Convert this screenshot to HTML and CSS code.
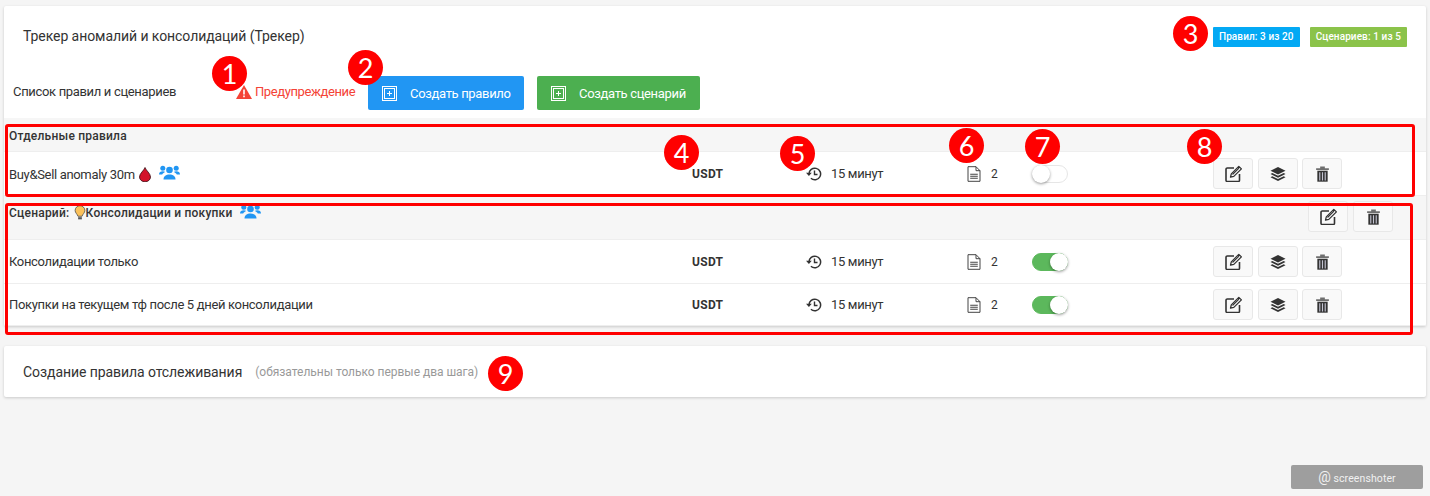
FILE: index.html
```html
<!DOCTYPE html>
<html lang="ru">
<head>
<meta charset="utf-8">
<title>Трекер</title>
<link rel="stylesheet" href="styles.css">
</head>
<body>
<svg class="defs" width="0" height="0" aria-hidden="true">
  <defs>
    <symbol id="i-edit" viewBox="0 0 17 17">
      <path d="M9 3H2.300C1.600 3 1 3.600 1 4.300v10.900c0 .7.600 1.300 1.300 1.300h10.900c.7 0 1.300-.6 1.300-1.300V9" fill="none" stroke="currentColor" stroke-width="1.600"/>
      <path d="M5.500 12.200l.8-3.300L13.800 1.400l2.600 2.500-7.600 7.500z" fill="#fff" stroke="currentColor" stroke-width="1.300" stroke-linejoin="round"/>
      <path d="M7.500 9.500l6.500-6.400" stroke="currentColor" stroke-width="1.100"/>
    </symbol>
    <symbol id="i-layers" viewBox="0 0 16 16">
      <path d="M8 1l7.500 3.800L8 8.500.5 4.800z" fill="currentColor"/>
      <path d="M2.300 7L.5 8 8 11.700 15.500 8l-1.800-1L8 9.800z" fill="currentColor"/>
      <path d="M2.300 10.300l-1.800 1L8 15l7.500-3.700-1.800-1L8 13.100z" fill="currentColor"/>
    </symbol>
    <symbol id="i-trash" viewBox="0 0 16 17">
      <path d="M5.500.5h5v1.800h4.300v2H1.200v-2h4.300z" fill="currentColor" opacity=".7"/>
      <path d="M2.500 5h11v11.700h-11z" fill="currentColor"/>
      <path d="M4.500 6.500h1.200v8.800H4.500zM7.400 6.500h1.200v8.800H7.400zM10.300 6.500h1.200v8.800h-1.200z" fill="#c4c4d2"/>
    </symbol>
    <symbol id="i-history" viewBox="0 0 16 16">
      <path d="M3 8a5.800 5.800 0 1 1 1.900 4.300" fill="none" stroke="currentColor" stroke-width="1.500"/>
      <path d="M0 6.800h5.800L2.900 10z" fill="currentColor"/>
      <path d="M8.500 4.500v4h3" fill="none" stroke="currentColor" stroke-width="1.400"/>
    </symbol>
    <symbol id="i-doc" viewBox="0 0 14 16">
      <path d="M1 .7h8l4 4v10.600H1z" fill="none" stroke="currentColor" stroke-width="1"/>
      <path d="M9 .7v4h4" fill="none" stroke="currentColor" stroke-width="1"/>
      <path d="M3.200 7.800h7.600v1H3.200zM3.200 9.800h7.600v1H3.200zM3.200 11.800h7.600v1H3.200z" fill="currentColor"/>
    </symbol>
    <symbol id="i-users" viewBox="0 0 21 15">
      <circle cx="10.500" cy="5" r="3.300" fill="currentColor"/>
      <path d="M4.500 14.500c0-3.500 2.500-5 6-5s6 1.500 6 5z" fill="currentColor"/>
      <circle cx="3.800" cy="3.300" r="2.500" fill="currentColor"/>
      <circle cx="17.200" cy="3.300" r="2.500" fill="currentColor"/>
      <path d="M0 9.500c0-2.200 1.500-3.300 3.800-3.300 1 0 1.800.2 2.400.7-1.500.7-2.600 1.500-3 2.600z" fill="currentColor"/>
      <path d="M21 9.500c0-2.200-1.500-3.300-3.800-3.300-1 0-1.800.2-2.400.7 1.500.7 2.600 1.500 3 2.600z" fill="currentColor"/>
    </symbol>
    <symbol id="i-plus" viewBox="0 0 15 15">
      <rect x=".5" y=".5" width="14" height="14" fill="none" stroke="currentColor"/>
      <rect x="2.500" y="2.500" width="10" height="10" fill="none" stroke="currentColor"/>
      <path d="M7 5h1v2h2v1H8v2H7V8H5V7h2z" fill="currentColor"/>
    </symbol>
  </defs>
</svg>

<main class="page">
  <section class="card card-main">
    <header class="head">
      <h1 class="title">Трекер аномалий и консолидаций (Трекер)</h1>
      <div class="badges">
        <span class="badge badge-blue">Правил: 3 из 20</span>
        <span class="badge badge-green">Сценариев: 1 из 5</span>
      </div>
    </header>
    <div class="toolbar">
      <span class="list-label">Список правил и сценариев</span>
      <span class="warning">
        <svg class="warn-icon" viewBox="0 0 16 14"><path d="M8 0l8 14H0z" fill="#f44336"/><path d="M7.200 4.500h1.600v5H7.200zM7.200 10.500h1.600v1.700H7.200z" fill="#fff"/></svg>
        Предупреждение
      </span>
      <button class="btn btn-blue"><svg class="btn-icon"><use href="#i-plus"/></svg>Создать правило</button>
      <button class="btn btn-green"><svg class="btn-icon"><use href="#i-plus"/></svg>Создать сценарий</button>
    </div>

    <div class="group-head group-head-first"><b class="group-title">Отдельные правила</b></div>
    <div class="row">
      <div class="name">Buy&amp;Sell anomaly 30m
        <svg class="drop" viewBox="0 0 12 15"><path d="M6 .5C7 3.500 11.500 6.500 11.500 10a5.500 4.800 0 0 1-11 0C.5 6.500 5 3.500 6 .5z" fill="#d3122a" stroke="#3a0a10" stroke-width=".8"/></svg>
        <svg class="users"><use href="#i-users"/></svg>
      </div>
      <div class="coin">USDT</div>
      <div class="time"><svg class="ic-history"><use href="#i-history"/></svg>15 минут</div>
      <div class="docs"><svg class="ic-doc"><use href="#i-doc"/></svg>2</div>
      <div class="switch"></div>
      <div class="actions">
        <button class="act"><svg class="act-ic"><use href="#i-edit"/></svg></button>
        <button class="act"><svg class="act-ic-layers"><use href="#i-layers"/></svg></button>
        <button class="act"><svg class="act-ic-trash"><use href="#i-trash"/></svg></button>
      </div>
    </div>

    <div class="group-head group-head-scenario">
      <b class="group-title">Сценарий:
        <svg class="bulb" viewBox="0 0 12 16"><path d="M6 .7a5.200 5.200 0 0 1 5.200 5.200c0 2.400-2.200 3.600-3 6.100H3.800c-.8-2.500-3-3.700-3-6.100A5.200 5.200 0 0 1 6 .7z" fill="#fbc15a" stroke="#444" stroke-width=".8"/><path d="M4 13h4v2.300H4z" fill="#555"/></svg>Консолидации и покупки</b>
      <svg class="users users-head"><use href="#i-users"/></svg>
      <div class="head-actions">
        <button class="act"><svg class="act-ic"><use href="#i-edit"/></svg></button>
        <button class="act"><svg class="act-ic-trash"><use href="#i-trash"/></svg></button>
      </div>
    </div>
    <div class="row">
      <div class="name">Консолидации только</div>
      <div class="coin">USDT</div>
      <div class="time"><svg class="ic-history"><use href="#i-history"/></svg>15 минут</div>
      <div class="docs"><svg class="ic-doc"><use href="#i-doc"/></svg>2</div>
      <div class="switch switch-on"></div>
      <div class="actions">
        <button class="act"><svg class="act-ic"><use href="#i-edit"/></svg></button>
        <button class="act"><svg class="act-ic-layers"><use href="#i-layers"/></svg></button>
        <button class="act"><svg class="act-ic-trash"><use href="#i-trash"/></svg></button>
      </div>
    </div>
    <div class="row row-last">
      <div class="name">Покупки на текущем тф после 5 дней консолидации</div>
      <div class="coin">USDT</div>
      <div class="time"><svg class="ic-history"><use href="#i-history"/></svg>15 минут</div>
      <div class="docs"><svg class="ic-doc"><use href="#i-doc"/></svg>2</div>
      <div class="switch switch-on"></div>
      <div class="actions">
        <button class="act"><svg class="act-ic"><use href="#i-edit"/></svg></button>
        <button class="act"><svg class="act-ic-layers"><use href="#i-layers"/></svg></button>
        <button class="act"><svg class="act-ic-trash"><use href="#i-trash"/></svg></button>
      </div>
    </div>
  </section>

  <section class="card card-create">
    <h2 class="title">Создание правила отслеживания</h2>
    <span class="hint">(обязательны только первые два шага)</span>
  </section>
</main>

<div class="frame frame-a"></div>
<div class="frame frame-b"></div>
<span class="mark m1">1</span>
<span class="mark m2">2</span>
<span class="mark m3">3</span>
<span class="mark m4">4</span>
<span class="mark m5">5</span>
<span class="mark m6">6</span>
<span class="mark m7">7</span>
<span class="mark m8">8</span>
<span class="mark m9">9</span>
<div class="watermark"><span class="wm-at">@</span> screenshoter</div>
</body>
</html>
```

FILE: styles.css
```css
* { box-sizing: border-box; }
html, body { margin: 0; height: 100%; }
body {
  background: #f5f5f5;
  font-family: Roboto, "Liberation Sans", sans-serif;
  font-size: 13px;
  letter-spacing: -.33px;
  color: #333;
  overflow: hidden;
  position: relative;
}
.defs { position: absolute; }
.page { padding: 6px 4px 0; }
.card {
  background: #fff;
  border-radius: 2px;
  box-shadow: 0 1px 3px rgba(0, 0, 0, .18);
}
.card-main { height: 320px; }
.card-create {
  margin-top: 20px;
  height: 51px;
  display: flex;
  align-items: center;
  padding-left: 19px;
  gap: 13px;
}
.head {
  display: flex;
  justify-content: space-between;
  align-items: center;
  height: 58px;
  padding: 2px 19px 0 19px;
}
.title { margin: 0; font-size: 14px; font-weight: 400; color: #333; letter-spacing: -.07px; }
.badges { display: flex; gap: 10px; margin-top: 2px; }
.badge {
  color: #fff;
  font-size: 10px;
  font-weight: 500;
  letter-spacing: .1px;
  height: 20px;
  line-height: 20px;
  padding: 0 6px;
  border-radius: 1px;
}
.badge-blue { background: #03a9f4; }
.badge-green { background: #8bc34a; }
.toolbar {
  display: flex;
  align-items: center;
  height: 54px;
  padding-left: 9px;
}
.list-label { width: 223px; }
.warning {
  display: flex;
  align-items: center;
  gap: 3px;
  width: 132px;
  color: #f44336;
  letter-spacing: -.4px;
  white-space: nowrap;
}
.warn-icon { width: 16px; height: 14px; flex: none; margin-top: 1px; }
.btn {
  display: flex;
  align-items: center;
  height: 34px;
  margin-top: 4px;
  border: 0;
  border-radius: 2px;
  color: #fff;
  font: 13px Roboto, sans-serif;
  letter-spacing: -.33px;
  padding: 0 14px;
  white-space: nowrap;
}
.btn-blue { background: #2196f3; width: 156px; margin-right: 13px; }
.btn-green { background: #4caf50; width: 163px; }
.btn-icon { width: 15px; height: 15px; margin-right: 13px; color: #fff; flex: none; }
.group-head {
  background: #f6f6f6;
  border-bottom: 1px solid #eee;
  display: flex;
  align-items: center;
  padding-left: 5px;
  position: relative;
}
.group-head-first { height: 34px; padding-top: 2px; }
.group-head-scenario { height: 44px; align-items: flex-start; padding-top: 9px; }
.group-title { font-size: 12px; font-weight: 500; color: #333; letter-spacing: .22px; }
.bulb { width: 12px; height: 15px; vertical-align: -3px; margin-left: 1px; }
.users { width: 21px; height: 15px; color: #2196f3; vertical-align: -1px; margin-left: 5px; }
.users-head { margin-left: 7px; margin-top: -1px; }
.head-actions {
  display: flex;
  gap: 5px;
  position: absolute;
  right: 33px;
  top: 5px;
}
.row {
  display: grid;
  grid-template-columns: 683px 114px 160px 66px 181px 1fr;
  align-items: center;
  height: 44px;
  padding-left: 5px;
  border-bottom: 1px solid #eee;
}
.row-last { height: 42px; }
.name { font-size: 13px; white-space: nowrap; }
.drop { width: 12px; height: 15px; vertical-align: -3px; margin-left: 1px; }
.coin { font-size: 12px; font-weight: 700; letter-spacing: .3px; }
.time { display: flex; align-items: center; gap: 9px; }
.docs { display: flex; align-items: center; gap: 10px; font-size: 12px; }
.ic-history { width: 16px; height: 16px; color: #333; }
.ic-doc { width: 14px; height: 16px; color: #444; margin-left: 1px; }
.switch {
  width: 36px;
  height: 18px;
  border-radius: 9px;
  border: 1px solid #e6e6e6;
  background: #fff;
  position: relative;
}
.switch::after {
  content: "";
  position: absolute;
  left: -1px;
  top: -1px;
  width: 18px;
  height: 18px;
  border-radius: 50%;
  background: #fff;
  box-shadow: 0 1px 3px rgba(0, 0, 0, .4);
}
.switch-on { background: #5cb85c; border-color: #5cb85c; }
.switch-on::after { left: auto; right: -1px; }
.actions { display: flex; gap: 4.500px; }
.act {
  width: 40px;
  height: 31px;
  padding: 0;
  background: #f9f9f9;
  border: 1px solid #e8e8e8;
  border-radius: 3px;
  display: flex;
  align-items: center;
  justify-content: center;
  color: #333;
}
.act-ic { width: 17px; height: 17px; }
.act-ic-layers { width: 16px; height: 16px; }
.act-ic-trash { width: 15px; height: 16px; }
.hint { color: #999; font-size: 12px; letter-spacing: -.03px; }
.frame {
  position: absolute;
  left: 5px;
  border: 3px solid #f00;
  border-radius: 3px;
}
.frame-a { top: 124px; width: 1410px; height: 73px; }
.frame-b { top: 203px; width: 1408px; height: 132px; }
.mark {
  position: absolute;
  width: 35px;
  height: 35px;
  border-radius: 50%;
  background: #f00;
  color: #fff;
  font: 400 27px/35px Lato, sans-serif;
  letter-spacing: 0;
  text-align: center;
}
.m1 { left: 212px; top: 56px; }
.m2 { left: 348px; top: 50px; }
.m3 { left: 1173px; top: 16px; }
.m4 { left: 664px; top: 135px; }
.m5 { left: 780px; top: 136px; }
.m6 { left: 949px; top: 128px; }
.m7 { left: 1025px; top: 129px; }
.m8 { left: 1187px; top: 129px; }
.m9 { left: 488px; top: 356px; }
.watermark {
  position: absolute;
  left: 1291px;
  top: 465px;
  width: 132px;
  height: 24px;
  background: #9e9e9e;
  border-radius: 2px;
  color: #f1f1f1;
  font: 10.500px/24px Roboto, sans-serif;
  letter-spacing: .1px;
  text-align: center;
}
.wm-at { font-size: 14px; letter-spacing: 0; }
```
